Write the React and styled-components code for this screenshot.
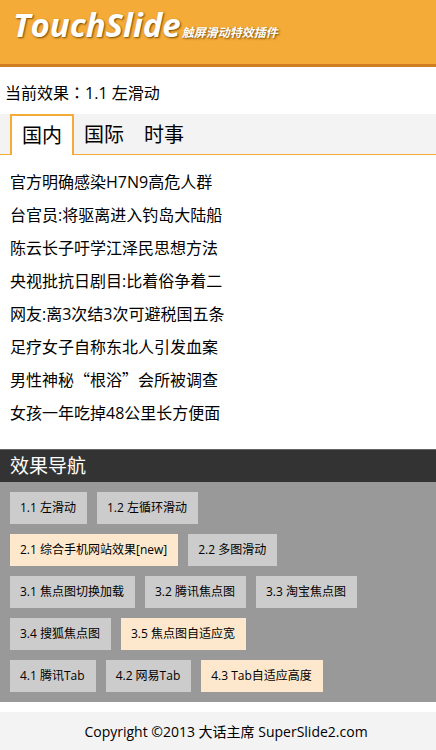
import React, { useState } from "react";
import styled, { createGlobalStyle } from "styled-components";

const GlobalStyle = createGlobalStyle`
  * {
    box-sizing: border-box;
  }

  body {
    margin: 0;
    background-color: #fff;
    color: #000;
    font-family: "Open Sans", "Noto Sans CJK SC", sans-serif;
    font-size: 16px;
  }

  h1, h2, p, ul {
    margin: 0;
    padding: 0;
  }

  ul {
    list-style: none;
  }
`;

const StyledHeader = styled.header`
  height: 67px;
  padding-left: 13px;
  background-color: #f4ab37;
  border-bottom: 3px solid #d07d22;
`;

const StyledLogo = styled.h1`
  color: white;
  font-size: 33px;
  font-style: italic;
  font-weight: bold;
  line-height: 50px;
  white-space: nowrap;
  text-shadow: 1px 1px 2px #764904;
`;

const StyledSlogan = styled.span`
  margin-left: 1px;
  font-size: 12px;
`;

const StyledCurrent = styled.p`
  padding: 10px 5px 5px;
  line-height: 32px;
`;

const StyledColon = styled.span`
  font-family: "Noto Sans CJK TC", sans-serif;
  line-height: 1;
`;

const StyledTabBar = styled.div`
  display: flex;
  height: 41px;
  padding-left: 10px;
  background-color: #f3f3f3;
  border-bottom: 1px solid #f4ab37;
`;

const StyledTab = styled.button`
  height: 41px;
  padding: 0 10px;
  border: ${(props) => (props.$active ? "2px solid #f4ab37" : "none")};
  border-bottom: none;
  background-color: ${(props) => (props.$active ? "#fff" : "transparent")};
  color: black;
  font-family: inherit;
  font-size: 20px;
  line-height: 39px;
  cursor: pointer;
`;

const StyledNewsList = styled.ul`
  padding: 11px 10px 19px;
`;

const StyledNewsItem = styled.li`
  line-height: 33px;
`;

const StyledLink = styled.a`
  color: black;
  text-decoration: none;
`;

const StyledQuote = styled.span`
  font-family: "Noto Sans CJK SC", sans-serif;
  line-height: 1;
`;

const StyledNav = styled.nav`
  padding-bottom: 10px;
  background-color: #999;
`;

const StyledNavTitle = styled.h2`
  padding-left: 10px;
  border-top: 1px solid #666;
  background-color: #333;
  color: white;
  font-size: 19px;
  font-weight: normal;
  line-height: 32px;
`;

const StyledNavGroup = styled.ul`
  display: flex;
  flex-wrap: wrap;
  gap: 10px;
  padding: 10px 10px 0;
`;

const StyledNavLink = styled.a`
  display: block;
  padding: 0 11px 0 10px;
  background-color: ${(props) => (props.$hot ? "#fde8cd" : "#ccc")};
  color: black;
  font-size: 12px;
  line-height: 32px;
  text-decoration: none;
`;

const StyledFooter = styled.footer`
  margin-top: 10px;
  padding-left: 16px;
  background-color: #f3f3f3;
  font-size: 14px;
  line-height: 40px;
  text-align: center;
`;

const tabs = ["国内", "国际", "时事"];

const news = [
  "官方明确感染H7N9高危人群",
  "台官员:将驱离进入钓岛大陆船",
  "陈云长子吁学江泽民思想方法",
  "央视批抗日剧目:比着俗争着二",
  "网友:离3次结3次可避税国五条",
  "足疗女子自称东北人引发血案",
  "男性神秘“根浴”会所被调查",
  "女孩一年吃掉48公里长方便面",
];

const navGroups = [
  [{ text: "1.1 左滑动" }, { text: "1.2 左循环滑动" }],
  [{ text: "2.1 综合手机网站效果[new]", hot: true }, { text: "2.2 多图滑动" }],
  [
    { text: "3.1 焦点图切换加载" },
    { text: "3.2 腾讯焦点图" },
    { text: "3.3 淘宝焦点图" },
    { text: "3.4 搜狐焦点图" },
    { text: "3.5 焦点图自适应宽", hot: true },
  ],
  [
    { text: "4.1 腾讯Tab" },
    { text: "4.2 网易Tab" },
    { text: "4.3 Tab自适应高度", hot: true },
  ],
];

// curly quotes take a full character cell in Chinese text
function withQuotes(title) {
  return title
    .split(/([“”])/)
    .map((part, index) =>
      /[“”]/.test(part) ? <StyledQuote key={index}>{part}</StyledQuote> : part
    );
}

function News() {
  const [current, setCurrent] = useState(0);

  return (
    <section>
      <StyledTabBar role="tablist">
        {tabs.map((tab, index) => (
          <StyledTab
            key={tab}
            type="button"
            role="tab"
            aria-selected={index === current}
            $active={index === current}
            onClick={() => setCurrent(index)}
          >
            {tab}
          </StyledTab>
        ))}
      </StyledTabBar>
      <StyledNewsList>
        {news.map((title) => (
          <StyledNewsItem key={title}>
            <StyledLink href="#">{withQuotes(title)}</StyledLink>
          </StyledNewsItem>
        ))}
      </StyledNewsList>
    </section>
  );
}

function App() {
  return (
    <>
      <GlobalStyle />
      <StyledHeader>
        <StyledLogo>
          TouchSlide
          <StyledSlogan>触屏滑动特效插件</StyledSlogan>
        </StyledLogo>
      </StyledHeader>
      <StyledCurrent>
        当前效果<StyledColon>：</StyledColon>1.1 左滑动
      </StyledCurrent>
      <News />
      <StyledNav>
        <StyledNavTitle>效果导航</StyledNavTitle>
        {navGroups.map((group) => (
          <StyledNavGroup key={group[0].text}>
            {group.map((item) => (
              <li key={item.text}>
                <StyledNavLink href="#" $hot={item.hot}>
                  {item.text}
                </StyledNavLink>
              </li>
            ))}
          </StyledNavGroup>
        ))}
      </StyledNav>
      <StyledFooter>Copyright ©2013 大话主席 SuperSlide2.com</StyledFooter>
    </>
  );
}

export default App;
